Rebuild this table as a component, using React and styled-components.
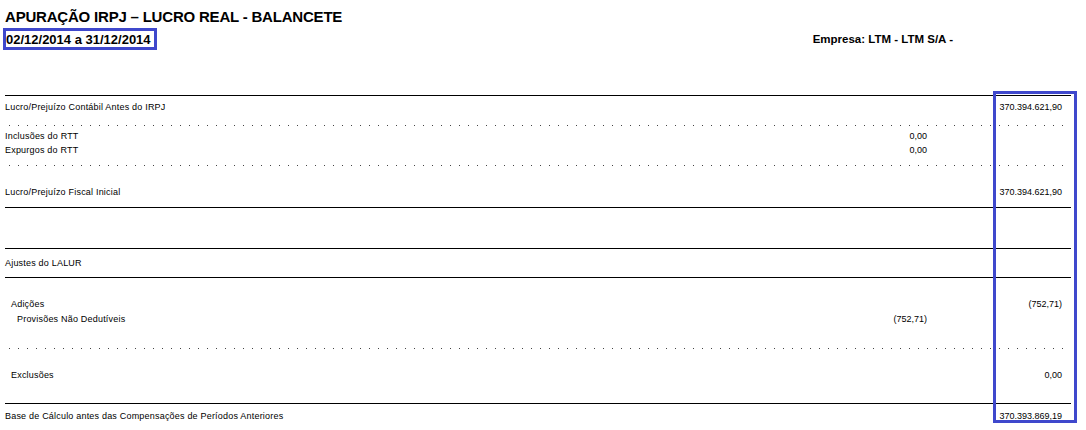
import React from "react";
import styled, { createGlobalStyle } from "styled-components";

const GlobalStyle = createGlobalStyle`
  body {
    margin: 0;
    background: #fff;
    font-family: "Liberation Sans", Arial, sans-serif;
    color: #000;
  }
`;

const Page = styled.div`
  position: relative;
  width: 1086px;
  height: 430px;
  overflow: hidden;
  background: #fff;
`;

const Report = styled.div`
  width: 1066px;
  margin-left: 5px;
`;

const Title = styled.h1`
  margin: 0;
  height: 28px;
  padding-top: 8px;
  box-sizing: border-box;
  font-size: 15px;
  line-height: 18px;
  font-weight: bold;
  letter-spacing: -0.2px;
  white-space: nowrap;
`;

const SubHeader = styled.div`
  display: flex;
  align-items: center;
  height: 22px;
`;

// blue highlight drawn round the period
const Period = styled.span`
  display: inline-flex;
  align-items: center;
  height: 22px;
  box-sizing: border-box;
  margin-left: -2px;
  padding: 0 3px 0 0;
  border: 3px solid #3f48cc;
  font-size: 13px;
  font-weight: bold;
  white-space: nowrap;
`;

const Company = styled.span`
  margin-left: auto;
  margin-right: 118px;
  font-size: 11.5px;
  font-weight: bold;
  white-space: nowrap;
`;

const Spacer = styled.div`
  height: ${(p) => p.h}px;
`;

const Rule = styled.div`
  height: 1px;
  background: #000;
`;

const Row = styled.div`
  display: grid;
  grid-template-columns: 1fr 127px 144px;
  align-items: center;
  height: ${(p) => p.h}px;
  font-size: 9px;
  white-space: nowrap;
`;

const Label = styled.span`
  padding-left: ${(p) => p.indent || 0}px;
  letter-spacing: 0.2px;
`;

const Mid = styled.span`
  text-align: right;
`;

const Total = styled.span`
  text-align: right;
  padding-right: 9px;
`;

// dotted leader line
const Dots = styled.div`
  height: ${(p) => p.h}px;
  margin-right: 5px;
  background-image: radial-gradient(circle, #444 0.6px, transparent 0.7px);
  background-size: 9px 1px;
  background-repeat: repeat-x;
  background-position: 0 ${(p) => p.y}px;
`;

const Highlight = styled.div`
  position: absolute;
  left: 993px;
  top: 91px;
  width: 84px;
  height: 332px;
  box-sizing: border-box;
  border: 3px solid #3f48cc;
  pointer-events: none;
`;

const Line = ({ h, label, indent, mid, total }) => (
  <Row h={h}>
    <Label indent={indent}>{label}</Label>
    <Mid>{mid}</Mid>
    <Total>{total}</Total>
  </Row>
);

export default function App() {
  return (
    <Page>
      <GlobalStyle />
      <Report>
        <Title>APURAÇÃO IRPJ – LUCRO REAL - BALANCETE</Title>
        <SubHeader>
          <Period>02/12/2014 a 31/12/2014</Period>
          <Company>Empresa: LTM - LTM S/A -</Company>
        </SubHeader>
        <Spacer h={45} />
        <Rule />
        <Line h={22} label="Lucro/Prejuízo Contábil Antes do IRPJ" total="370.394.621,90" />
        <Dots h={11} y={7} />
        <Line h={14} label="Inclusões do RTT" mid="0,00" />
        <Line h={14} label="Expurgos do RTT" mid="0,00" />
        <Dots h={24} y={8} />
        <Line h={22} label="Lucro/Prejuízo Fiscal Inicial" total="370.394.621,90" />
        <Spacer h={4} />
        <Rule />
        <Spacer h={40} />
        <Rule />
        <Line h={28} label="Ajustes do LALUR" />
        <Rule />
        <Spacer h={19} />
        <Line h={14} label="Adições" indent={6} total="(752,71)" />
        <Line h={16} label="Provisões Não Dedutíveis" indent={12} mid="(752,71)" />
        <Dots h={25} y={21} />
        <Line h={46} label="Exclusões" indent={6} total="0,00" />
        <Spacer h={5} />
        <Rule />
        <Line h={24} label="Base de Cálculo antes das Compensações de Períodos Anteriores" total="370.393.869,19" />
      </Report>
      <Highlight />
    </Page>
  );
}
